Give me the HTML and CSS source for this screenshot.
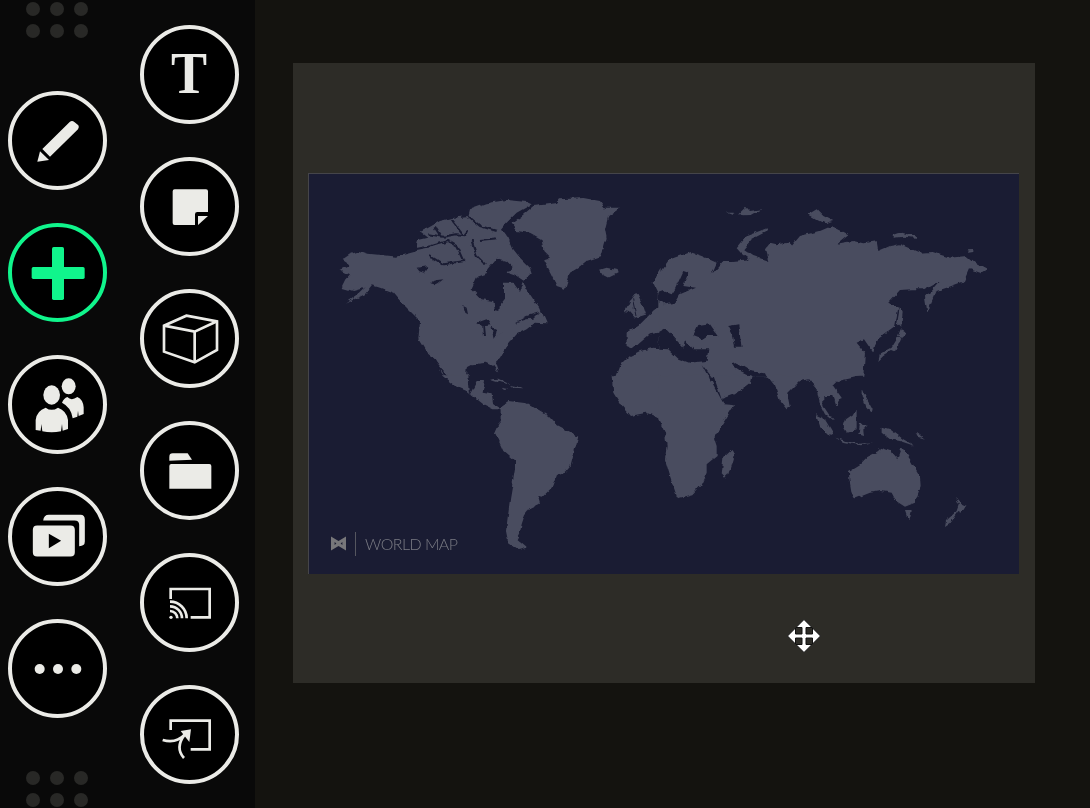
FILE: index.html
```html
<!DOCTYPE html>
<html lang="en">
<head>
  <meta charset="UTF-8">
  <title>Whiteboard</title>
  <link rel="stylesheet" href="styles.css">
</head>
<body>
  <aside class="sidebar">
    <div class="tool-col tool-col-main">
      <div class="grip"><i></i><i></i><i></i><i></i><i></i><i></i></div>

      <div class="tool-list">
        <!-- Pencil -->
        <button class="tool">
          <svg class="icon" viewBox="67 316 210 210">
            <path d="M125 445 L207 364 Q214 358 221 364 L233 374 Q237 380 232 386 L148 468 Z"/>
            <path d="M118 452 L145 478 L110 483 Z"/>
          </svg>
        </button>
        <!-- Add -->
        <button class="tool tool-active">
          <svg class="icon" viewBox="67 711 210 210">
            <rect x="154" y="738" width="36" height="159" rx="5"/>
            <rect x="93" y="798" width="159" height="36" rx="5"/>
          </svg>
        </button>
        <!-- People -->
        <button class="tool">
          <svg class="icon" viewBox="67 298 210 210">
            <ellipse cx="153" cy="373" rx="25" ry="29"/>
            <path d="M105 478 V448 Q108 420 135 411 Q153 424 172 411 Q198 420 202 448 V475 L186 480 L184 460 L181 482 Q153 488 125 482 L122 460 L120 480 Z"/>
            <ellipse cx="204" cy="347" rx="21" ry="24"/>
            <path d="M184 396 Q190 382 200 379 Q212 392 230 379 Q247 386 249 410 V430 L234 436 L232 420 L230 438 L216 443 Q212 410 184 396 Z"/>
          </svg>
        </button>
        <!-- Videos -->
        <button class="tool">
          <svg class="icon" viewBox="7.5 -10.5 210 210">
            <path d="M68 45 Q70 28 85 28 H180 Q193 28 193 42 V108 Q193 122 176 122 V58 Q176 45 162 45 Z"/>
            <path fill-rule="evenodd" d="M50 60 H150 Q163 60 163 73 V140 Q163 153 150 153 H50 Q37 153 37 140 V73 Q37 60 50 60 Z M85 85 V128 L122 106 Z"/>
          </svg>
        </button>
        <!-- More -->
        <button class="tool">
          <svg class="icon" viewBox="67 280 210 210">
            <circle cx="117" cy="385" r="15"/>
            <circle cx="172" cy="385" r="15"/>
            <circle cx="227" cy="385" r="15"/>
          </svg>
        </button>
      </div>

      <div class="grip"><i></i><i></i><i></i><i></i><i></i><i></i></div>
    </div>

    <div class="tool-col">
      <div class="tool-list">
        <!-- Text -->
        <button class="tool tool-text"><span>T</span></button>
        <!-- Sticky note -->
        <button class="tool">
          <svg class="icon" viewBox="463 513 210 210">
            <path d="M522 565 H616 Q622 565 622 571 V633 H590 Q583 633 583 640 V672 H522 Q516 672 516 666 V571 Q516 565 522 565 Z"/>
            <path d="M592 645 H622 L592 672 Z"/>
          </svg>
        </button>
        <!-- 3D object -->
        <button class="tool">
          <svg class="icon icon-line" viewBox="463 100 210 210">
            <path d="M557 135 L649 152 V238 L582 275 L490 243 V165 Z"/>
            <path d="M490 165 L582 183 L649 152 M582 183 V275"/>
          </svg>
        </button>
        <!-- Folder -->
        <button class="tool">
          <svg class="icon" viewBox="463 496 210 210">
            <path d="M506 570 V558 Q506 548 516 548 H561 L574 567 Z"/>
            <path d="M512 580 H626 Q632 580 632 586 V654 H506 V586 Q506 580 512 580 Z"/>
          </svg>
        </button>
        <!-- Cast -->
        <button class="tool">
          <svg class="icon" viewBox="463 82 210 210">
            <path class="line" d="M510 175 V145 H627 V230 H570"/>
            <path class="line" d="M508 183 A50 50 0 0 1 558 233 M508 197 A36 36 0 0 1 544 233 M508 211 A22 22 0 0 1 530 233"/>
            <circle cx="511" cy="230" r="5"/>
          </svg>
        </button>
        <!-- Connect -->
        <button class="tool">
          <svg class="icon" viewBox="463 478 210 210">
            <path class="line" d="M510 568 V540 H627 V626 H570"/>
            <path class="line" d="M486 598 Q525 610 552 582 M550 652 Q522 622 552 582"/>
            <path d="M540 571 L571 566 L566 604 Z"/>
          </svg>
        </button>
      </div>
    </div>
  </aside>

  <main class="canvas">
    <section class="slide">
      <figure class="map">
        <svg class="map-art" viewBox="309 173 710 400">
          <defs>
            <!-- roughens the hand traced coast lines -->
            <filter id="coast" x="0" y="0" width="100%" height="100%" color-interpolation-filters="sRGB">
              <feTurbulence type="fractalNoise" baseFrequency=".14" numOctaves="2" seed="4"/>
              <feDisplacementMap in="SourceGraphic" scale="5" xChannelSelector="R" yChannelSelector="G"/>
              <feGaussianBlur stdDeviation=".35"/>
            </filter>
          </defs>
          <g filter="url(#coast)">
            <!-- NW quarter: North America, Greenland, west Europe -->
            <g transform="translate(300 165) scale(.3333)">
              <path class="land" d="M125 282 L150 265 L180 255 L205 263 L250 268 L290 272 L320 265 L345 258 L355 222 L385 215 L362 197 L385 185 L420 165 L460 155 L505 150 L510 130 L560 112 L620 102 L680 108 L695 115 L650 140 L620 170 L605 190 L625 215 L640 250 L660 275 L690 305 L695 320 L670 345 L680 370 L700 400 L720 425 L740 472 L705 470 L680 490 L650 505 L620 540 L600 575 L585 590 L595 622 L580 600 L560 590 L520 595 L500 605 L498 640 L440 640 L425 620 L405 580 L380 560 L355 520 L360 465 L330 435 L305 410 L280 380 L240 365 L215 358 L195 385 L135 413 L175 385 L195 365 L160 375 L125 365 L135 345 L150 328 L118 312 L148 298 Z"/>
              <path class="land" d="M635 172 L665 150 L700 120 L770 112 L780 100 L850 96 L900 105 L915 125 L960 125 L925 150 L915 190 L920 215 L905 270 L860 285 L835 305 L810 320 L795 368 L770 360 L745 310 L735 280 L750 275 L730 255 L725 220 L690 200 L650 195 Z"/>
              <path class="land" d="M898 312 L920 305 L950 312 L953 322 L925 335 L905 325 Z"/>
              <path class="land" d="M1010 378 L1030 420 L1038 445 L1005 455 L990 438 L975 435 L990 405 Z"/>
              <path class="land" d="M1085 305 L1058 350 L1075 385 L1085 385 Z"/>
              <path class="land" d="M1085 415 L1075 425 L1050 445 L1015 480 L980 500 L980 540 L1000 548 L1020 530 L1050 505 L1075 500 L1085 515 Z"/>
              <path class="land" d="M945 640 L960 600 L990 570 L1020 555 L1060 545 L1085 548 V640 Z"/>
              <path class="water" d="M515 370 L530 335 L560 325 L562 310 L590 275 L620 285 L635 300 L620 320 L650 330 L672 345 L660 378 L640 350 L612 350 L612 395 L600 410 L598 438 L585 435 L580 405 L545 400 Z"/>
              <path class="water" d="M490 420 L500 425 L504 445 L496 440 Z"/>
              <path class="water" d="M530 470 L560 460 L572 478 L555 480 L558 510 L552 510 L550 482 Z"/>
              <path class="water" d="M575 482 L590 490 L586 512 L615 495 L580 516 Z"/>
              <path class="water" d="M645 470 L680 450 L720 438 L700 458 L678 460 Z"/>
              <path class="water" d="M350 305 L385 300 L372 320 L358 316 Z"/>
              <path class="water" d="M392 355 L412 342 L430 340 L415 352 L402 358 Z"/>
              <path class="channel" d="M385 205 L430 212 L470 205 L495 208 L505 195"/>
              <path class="channel" d="M345 250 L395 240 L445 225 L470 240 L490 285 L430 295 L390 270"/>
              <path class="channel" d="M515 225 L530 270 L555 295"/>
              <path class="channel" d="M455 160 L490 205"/>
              <path class="channel" d="M505 150 L540 180 L590 195"/>
              <path class="channel" d="M540 225 L590 220"/>
              <path class="channel" d="M405 185 L420 208"/>
              <path class="channel" d="M395 575 L440 630"/>
              <path class="channel thin" d="M305 410 L320 435 L360 465"/>
              <path class="channel thin" d="M998 400 L1008 450"/>
            </g>

            <!-- NE quarter: Eurasia -->
            <g transform="translate(660 165) scale(.3333)">
              <path class="land" d="M-5 330 L30 280 L90 258 L125 270 L170 290 L155 325 L190 285 L215 285 L270 280 L245 260 L232 245 L260 210 L320 187 L322 195 L275 220 L250 250 L280 270 L325 285 L315 250 L330 230 L350 235 L385 230 L395 240 L420 210 L480 195 L515 180 L565 205 L530 233 L580 225 L610 232 L650 225 L655 255 L690 240 L720 235 L780 260 L815 258 L870 275 L920 270 L950 295 L982 312 L965 322 L930 310 L915 345 L860 365 L830 375 L802 440 L795 395 L838 345 L795 370 L760 370 L720 372 L685 410 L715 425 L705 480 L650 520 L640 560 L612 520 L590 530 L615 560 L610 632 L-5 632 Z"/>
              <path class="water" d="M-5 380 L10 375 L35 385 L45 370 L70 315 L85 320 L70 360 L105 365 L60 385 L45 410 L15 415 L-5 398 Z"/>
              <path class="water" d="M100 510 L115 480 L150 475 L175 510 L140 510 L125 520 Z"/>
              <path class="water" d="M205 480 L235 475 L245 545 L225 545 L220 510 Z"/>
              <path class="water" d="M-5 497 L15 487 L40 512 L70 545 L75 520 L100 550 L145 550 L140 585 L88 590 L55 578 L25 550 L-5 548 Z"/>
              <path class="water" d="M125 595 L155 632 L145 632 Z"/>
              <path class="water" d="M210 595 L230 590 L270 615 L315 622 L320 632 L275 632 L262 625 L235 612 Z"/>
              <path class="land" d="M200 140 L225 140 L215 146 Z M238 142 L258 122 L270 135 L305 130 L275 147 L245 148 Z"/>
              <path class="land" d="M445 145 L470 130 L490 150 L520 165 L495 172 L470 160 Z"/>
              <path class="land" d="M695 205 L715 198 L740 205 L768 208 L768 215 L730 212 L705 215 Z"/>
              <path class="land" d="M920 253 L940 252 L940 258 L925 260 Z"/>
              <path class="land" d="M720 420 L728 440 L724 482 L712 470 Z"/>
              <path class="land" d="M722 490 L738 498 L725 512 L714 510 Z"/>
              <path class="land" d="M655 585 L660 565 L695 545 L715 512 L724 514 L712 545 L670 570 Z"/>
            </g>

            <!-- SW quarter: Central and South America, west Africa -->
            <g transform="translate(300 375) scale(.3333)">
              <path class="land" d="M425 -2 L505 -2 L510 55 L515 45 L530 15 L555 15 L548 50 L575 55 L580 85 L600 98 L610 85 L625 75 L680 82 L720 105 L745 120 L770 148 L835 182 L825 220 L812 270 L795 290 L768 300 L755 335 L725 365 L715 362 L720 380 L690 395 L675 415 L665 445 L660 470 L650 490 L680 515 L655 522 L625 500 L618 465 L630 370 L645 280 L645 255 L610 225 L585 170 L605 125 L605 100 L580 100 L550 85 L500 45 L465 30 Z"/>
              <path class="land" d="M570 10 L595 8 L635 28 L600 18 Z M605 35 L625 40 L612 42 Z M630 30 L660 35 L670 40 L640 38 Z"/>
              <path class="land" d="M935 -2 L940 50 L965 90 L990 120 L1040 110 L1075 125 L1085 150 V-2 Z"/>
            </g>

            <!-- SE quarter: Africa, south Asia, Australia -->
            <g transform="translate(660 375) scale(.3333)">
              <path class="land" d="M-5 -2 L145 -2 L165 35 L190 82 L225 85 L190 140 L162 185 L170 210 L170 240 L140 265 L140 290 L125 325 L100 355 L60 365 L50 360 L30 300 L15 250 L20 210 L15 170 L-5 130 Z"/>
              <path class="land" d="M160 -2 L185 70 L225 55 L270 20 L275 -2 Z"/>
              <path class="land" d="M320 -2 L345 30 L360 75 L380 100 L390 95 L385 70 L385 50 L420 15 L445 10 L470 40 L480 85 L495 115 L520 135 L490 90 L490 60 L520 60 L530 90 L545 65 L520 30 L535 15 L580 5 L610 -2 Z"/>
              <path class="land" d="M190 245 L215 222 L222 235 L205 295 L195 305 L185 295 Z"/>
              <path class="land" d="M468 115 L490 125 L520 175 L510 180 L480 150 Z"/>
              <path class="land" d="M525 185 L560 195 L600 203 L640 198 L600 208 L550 198 Z"/>
              <path class="land" d="M555 130 L590 105 L590 160 L560 170 L548 150 Z"/>
              <path class="land" d="M605 35 L615 60 L635 95 L632 110 L615 90 L605 60 Z"/>
              <path class="land" d="M600 145 L625 150 L610 160 L612 180 L595 175 Z"/>
              <path class="land" d="M665 152 L690 160 L730 190 L765 210 L720 195 L690 190 L665 170 Z"/>
              <path class="land" d="M770 170 L780 178 L795 188 L775 182 Z"/>
              <path class="land" d="M567 285 L600 265 L625 240 L655 225 L660 215 L690 225 L712 250 L725 212 L750 250 L780 300 L782 330 L765 380 L735 392 L708 375 L695 350 L665 345 L630 350 L585 368 L575 350 L568 310 Z"/>
              <path class="land" d="M735 405 L755 405 L750 428 L742 425 Z"/>
              <path class="land" d="M888 365 L905 385 L918 390 L905 410 L895 405 L870 440 L855 450 L858 435 L890 405 L897 385 Z"/>
            </g>
          </g>
        </svg>

        <figcaption class="map-label">
          <svg class="map-logo" viewBox="0 0 15 15">
            <path d="M0 .5 L7.5 5 L15 .5 V14.5 L7.5 10 L0 14.5 Z M3.6 6 V9 L5.4 7.5 Z M11.4 6 L9.6 7.5 L11.4 9 Z" fill-rule="evenodd"/>
          </svg>
          <span class="map-title">WORLD MAP</span>
        </figcaption>
      </figure>

      <svg class="move-cursor" viewBox="-17 -17 34 34">
        <path d="M0 -16.5 L8 -8.5 L2 -8.5 L2 -2 L8.5 -2 L8.5 -8 L16.5 0 L8.5 8 L8.5 2 L2 2 L2 8.5 L8 8.5 L0 16.5 L-8 8.5 L-2 8.5 L-2 2 L-8.5 2 L-8.5 8 L-16.5 0 L-8.5 -8 L-8.5 -2 L-2 -2 L-2 -8.5 L-8 -8.5 Z"/>
      </svg>
    </section>
  </main>
</body>
</html>
```

FILE: styles.css
```css
* {
  box-sizing: border-box;
}

body {
  margin: 0;
  width: 1090px;
  height: 808px;
  overflow: hidden;
  display: flex;
  background-color: #14130f;
  font-family: "Liberation Sans", Arial, sans-serif;
}

/* Left tool bars */
.sidebar {
  width: 255px;
  height: 808px;
  padding-left: 8px;
  display: flex;
  gap: 33px;
  background-color: #090909;
}

.tool-col {
  width: 99px;
  padding-top: 25px;
}

.tool-col-main {
  padding-top: 2px;
}

.tool-col-main .tool-list {
  margin: 53px 0;
}

.tool-list {
  display: flex;
  flex-direction: column;
  gap: 33px;
}

.tool {
  width: 99px;
  height: 99px;
  padding: 0;
  display: flex;
  align-items: center;
  justify-content: center;
  border: 4px solid #ebebe7;
  border-radius: 50%;
  background-color: #000;
  color: #ebebe7;
}

.tool-active {
  border-color: #10f58c;
  color: #10f58c;
}

.tool-text {
  padding-bottom: 3px;
  font-family: "Liberation Serif", serif;
  font-size: 60px;
  font-weight: 700;
  line-height: 1;
}

.tool-text span {
  display: inline-block;
  transform: scaleX(.9);
}

.icon {
  width: 70px;
  height: 70px;
  fill: currentColor;
}

.icon-line path,
.icon .line {
  fill: none;
  stroke: currentColor;
  stroke-width: 8;
}

.grip {
  width: 62px;
  margin-left: 18px;
  display: grid;
  grid-template-columns: repeat(3, 14px);
  justify-content: space-between;
  row-gap: 8px;
}

.grip i {
  width: 14px;
  height: 14px;
  border-radius: 50%;
  background-color: #282826;
}

/* Canvas */
.canvas {
  flex: 1;
  padding: 63px 0 0 38px;
}

.slide {
  position: relative;
  width: 742px;
  height: 620px;
  padding-left: 15px;
  display: flex;
  align-items: center;
  background-color: #2d2c27;
}

.map {
  position: relative;
  width: 711px;
  height: 401px;
  margin: 0;
  border-top: 1px solid #45454a;
  border-left: 1px solid #45454a;
  background-color: #1a1c33;
}

.map-art {
  display: block;
  width: 710px;
  height: 400px;
}

.land {
  fill: #494c5f;
}

.water {
  fill: #1a1c33;
}

.channel {
  fill: none;
  stroke: #1a1c33;
  stroke-width: 6;
  stroke-linejoin: round;
}

.channel.thin {
  stroke-width: 3;
}

.map-label {
  position: absolute;
  left: 22px;
  top: 358px;
  height: 24px;
  display: flex;
  align-items: center;
}

.map-logo {
  width: 15px;
  height: 15px;
  fill: #77777a;
}

.map-title {
  height: 24px;
  margin-left: 9px;
  padding-left: 9px;
  border-left: 1px solid #55565f;
  font-family: Lato, sans-serif;
  font-size: 16px;
  font-weight: 300;
  line-height: 24px;
  letter-spacing: -.55px;
  color: #7a7b84;
}

.move-cursor {
  position: absolute;
  left: 494px;
  top: 556px;
  width: 34px;
  height: 34px;
  fill: #fff;
  stroke: #111;
  stroke-width: 1;
}
```
